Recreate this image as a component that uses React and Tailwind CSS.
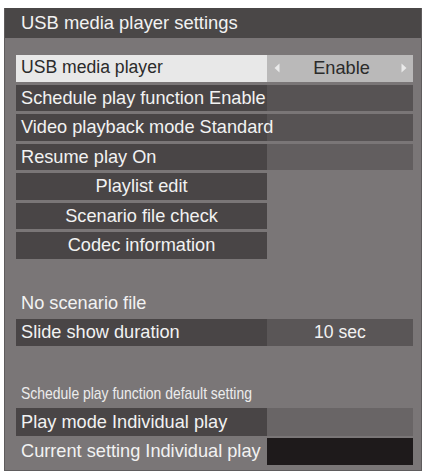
export default function App() {
    const font = { fontFamily: '"Liberation Sans", Arial, sans-serif' };

    const menuRows = [
        { label: "Schedule play function Enable", right: "bg-[#575354]" },
        { label: "Video playback mode Standard", right: "bg-[#575354]" },
        { label: "Resume play On", right: "bg-[#625e5f]" },
    ];

    const buttons = ["Playlist edit", "Scenario file check", "Codec information"];

    return (
        <div className="w-[426px] h-[473px] bg-white pt-[8px] pl-[4px]" style={font}>
            <div className="w-[418px] h-[463px] bg-[#7a7677] border-l border-r border-b border-[#5f5c5d] flex flex-col text-[18.2px] text-[#f2f2f2]">
                {/* Header */}
                <div className="h-[30px] bg-[#4a4747] flex items-center pl-[16px] text-[18.4px] leading-none">
                    USB media player settings
                </div>

                <div className="flex flex-col pl-[11px] pt-[17px]">
                    <div className="flex flex-col gap-[3px]">
                        {/* Selected row */}
                        <div className="flex h-[26.5px] w-[397px]">
                            <div className="w-[251px] bg-[#e8e8e8] text-[#2b2b2b] text-[17.6px] flex items-center pl-[5px] leading-none">
                                USB media player
                            </div>
                            <div className="flex-1 bg-[#bab9b9] text-[#2b2b2b] flex items-center justify-between pl-[7px] pr-[6px] leading-none">
                                <svg width="6" height="10" viewBox="0 0 6 10">
                                    <path d="M5.5 0.5 L0.5 5 L5.5 9.5 Z" fill="#f6f6f6" fillOpacity="0.8" />
                                </svg>
                                <span className="ml-[2px]">Enable</span>
                                <svg width="6" height="10" viewBox="0 0 6 10">
                                    <path d="M0.5 0.5 L5.5 5 L0.5 9.5 Z" fill="#f6f6f6" fillOpacity="0.8" />
                                </svg>
                            </div>
                        </div>

                        {menuRows.map((row) => (
                            <div key={row.label} className="flex h-[26.5px] w-[397px]">
                                <div className="w-[251px] bg-[#494546] flex items-center pl-[5px] leading-none whitespace-nowrap overflow-visible z-10">
                                    {row.label}
                                </div>
                                <div className={`flex-1 ${row.right}`}></div>
                            </div>
                        ))}

                        {buttons.map((label) => (
                            <div key={label} className="h-[26.5px] w-[251px] bg-[#494546] flex items-center justify-center leading-none">
                                {label}
                            </div>
                        ))}
                    </div>

                    <div className="mt-[31.5px] h-[26px] flex items-center pl-[5px] leading-none">
                        No scenario file
                    </div>

                    {/* Slide show */}
                    <div className="mt-[3px] flex h-[27px] w-[397px]">
                        <div className="w-[251px] bg-[#494546] flex items-center pl-[5px] leading-none">
                            Slide show duration
                        </div>
                        <div className="flex-1 bg-[#5a5657] flex items-center justify-center leading-none text-[17.6px]">
                            10 sec
                        </div>
                    </div>

                    <div className="mt-[37px] h-[20px] flex items-center pl-[5px] leading-none">
                        <span className="inline-block text-[17px] scale-x-[0.82] origin-left whitespace-nowrap text-[#ececec]">
                            Schedule play function default setting
                        </span>
                    </div>

                    {/* Schedule defaults */}
                    <div className="mt-[5px] flex h-[28px] w-[397px]">
                        <div className="w-[251px] bg-[#494546] flex items-center pl-[5px] leading-none">
                            Play mode Individual play
                        </div>
                        <div className="flex-1 bg-[#696566]"></div>
                    </div>
                    <div className="mt-[2px] flex h-[27px] w-[397px]">
                        <div className="w-[251px] flex items-center pl-[5px] leading-none whitespace-nowrap z-10">
                            Current setting Individual play
                        </div>
                        <div className="flex-1 bg-[#1e1a1b]"></div>
                    </div>
                </div>
            </div>
        </div>
    );
}
